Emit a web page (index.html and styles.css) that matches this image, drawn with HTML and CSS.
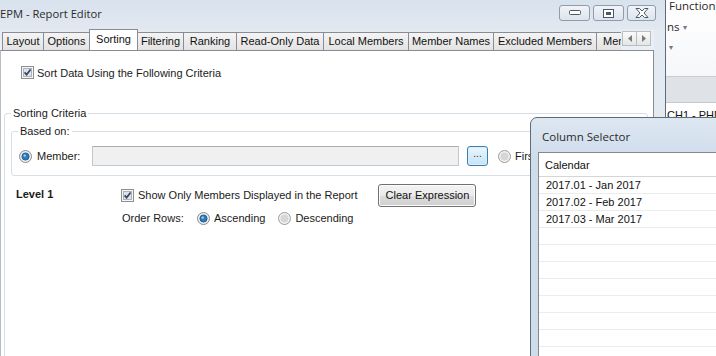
FILE: index.html
```html
<!DOCTYPE html>
<html>
<head>
<meta charset="utf-8">
<link rel="stylesheet" href="styles.css">
</head>
<body>
<div class="desktop">
  <div class="main-win">
    <div class="titlebar">
      <span class="title">EPM - Report Editor</span>
      <div class="wbtns">
        <div class="wbtn"><svg width="12" height="6" viewBox="0 0 12 6"><rect x="0.5" y="0.5" width="11" height="4" rx="1" fill="#fff" stroke="#4d5867"/></svg></div>
        <div class="wbtn"><svg width="11" height="9" viewBox="0 0 11 9"><rect x="0.5" y="0.5" width="10" height="8" fill="#fff" stroke="#4d5867"/><rect x="3" y="3" width="5" height="3" fill="#4d5867"/></svg></div>
        <div class="wbtn close"><svg width="14" height="10" viewBox="0 0 14 10"><path d="M1 0.5 H4.5 L7 3 L9.5 0.5 H13 L9 5 L13 9.5 H9.5 L7 7 L4.5 9.5 H1 L5 5 Z" fill="#fff" stroke="#4d5867" stroke-linejoin="round"/></svg></div>
      </div>
    </div>
    <div class="client">
      <div class="tabstrip">
        <div class="tab w-layout">Layout</div>
        <div class="tab w-options">Options</div>
        <div class="tab active w-sorting">Sorting</div>
        <div class="tab w-filtering">Filtering</div>
        <div class="tab w-ranking">Ranking</div>
        <div class="tab w-readonly">Read-Only Data</div>
        <div class="tab w-local">Local Members</div>
        <div class="tab w-names">Member Names</div>
        <div class="tab w-excluded">Excluded Members</div>
        <div class="tab w-men">Men</div>
        <div class="tab-scroll">
          <div class="sbtn"><svg width="4" height="7" viewBox="0 0 4 7"><path d="M4 0 L0 3.5 L4 7 Z" fill="#7a7a7a"/></svg></div>
          <div class="sbtn"><svg width="4" height="7" viewBox="0 0 4 7"><path d="M0 0 L4 3.5 L0 7 Z" fill="#7a7a7a"/></svg></div>
        </div>
      </div>
      <div class="tabpage">
        <div class="row top-chk">
          <svg class="chk" width="13" height="13" viewBox="0 0 13 13"><rect x="0.5" y="0.5" width="12" height="12" fill="#f6f6f6" stroke="#8e8f8f"/><rect x="2.5" y="2.5" width="8" height="8" fill="#dfe2e6" stroke="#aeb3b9"/><path d="M3.6 6.4 L5.6 8.6 L9.6 3.4" fill="none" stroke="#36466a" stroke-width="1.7"/></svg>
          <span>Sort Data Using the Following Criteria</span>
        </div>
        <fieldset class="group sorting">
          <legend>Sorting Criteria</legend>
          <fieldset class="group basedon">
            <legend>Based on:</legend>
            <div class="row member-row">
              <svg class="radio" width="13" height="13" viewBox="0 0 13 13"><circle cx="6.5" cy="6.5" r="6" fill="#eeeeee" stroke="#8a8a8a"/><circle cx="6.5" cy="6.5" r="3.6" fill="#2a7cc0" stroke="#1a4f80" stroke-width="0.8"/><circle cx="5.7" cy="5.6" r="1.2" fill="#9fd3f5"/></svg>
              <span class="lbl-member">Member:</span>
              <div class="textbox"></div>
              <div class="dots-btn">...</div>
              <svg class="radio" width="13" height="13" viewBox="0 0 13 13"><circle cx="6.5" cy="6.5" r="6" fill="#f2f2f2" stroke="#9a9a9a"/><circle cx="6.5" cy="6.5" r="4" fill="#d6d6d6"/></svg>
              <span class="lbl-first">First</span>
            </div>
          </fieldset>
          <div class="level-grid">
            <div class="level-lbl">Level 1</div>
            <div class="row level-row1">
              <svg class="chk" width="13" height="13" viewBox="0 0 13 13"><rect x="0.5" y="0.5" width="12" height="12" fill="#f6f6f6" stroke="#8e8f8f"/><rect x="2.5" y="2.5" width="8" height="8" fill="#dfe2e6" stroke="#aeb3b9"/><path d="M3.6 6.4 L5.6 8.6 L9.6 3.4" fill="none" stroke="#36466a" stroke-width="1.7"/></svg>
              <span>Show Only Members Displayed in the Report</span>
              <div class="btn">Clear Expression</div>
            </div>
            <div></div>
            <div class="row level-row2">
              <span class="lbl-order">Order Rows:</span>
              <svg class="radio" width="13" height="13" viewBox="0 0 13 13"><circle cx="6.5" cy="6.5" r="6" fill="#eeeeee" stroke="#8a8a8a"/><circle cx="6.5" cy="6.5" r="3.6" fill="#2a7cc0" stroke="#1a4f80" stroke-width="0.8"/><circle cx="5.7" cy="5.6" r="1.2" fill="#9fd3f5"/></svg>
              <span class="lbl-asc">Ascending</span>
              <svg class="radio" width="13" height="13" viewBox="0 0 13 13"><circle cx="6.5" cy="6.5" r="6" fill="#f2f2f2" stroke="#9a9a9a"/><circle cx="6.5" cy="6.5" r="4" fill="#d6d6d6"/></svg>
              <span class="lbl-desc">Descending</span>
            </div>
          </div>
        </fieldset>
      </div>
    </div>
  </div>
  <div class="side-app">
    <div class="side-top">
      <div class="side-func">Function</div>
      <div class="side-ns">ns <span class="caret">&#9662;</span></div>
      <div class="side-caret">&#9662;</div>
    </div>
    <div class="side-band"></div>
    <div class="side-cell">CH1 - PHD:</div>
  </div>
  <div class="col-selector">
    <div class="cs-title">Column Selector</div>
    <div class="cs-list">
      <div class="cs-head">Calendar</div>
      <div class="cs-row">2017.01 - Jan 2017</div>
      <div class="cs-row">2017.02 - Feb 2017</div>
      <div class="cs-row">2017.03 - Mar 2017</div>
      <div class="cs-row"></div>
      <div class="cs-row"></div>
      <div class="cs-row"></div>
      <div class="cs-row"></div>
      <div class="cs-row"></div>
      <div class="cs-row"></div>
      <div class="cs-row"></div>
      <div class="cs-row"></div>
    </div>
  </div>
</div>
</body>
</html>
```
FILE: styles.css
```css
* { box-sizing: border-box; }
html, body { margin: 0; padding: 0; }
body {
  width: 716px;
  height: 356px;
  overflow: hidden;
  font-family: "Liberation Sans", Arial, sans-serif;
  font-size: 11px;
  color: #1a1a1a;
  background: #fff;
}
.desktop {
  position: relative;
  display: flex;
  width: 716px;
  height: 356px;
}
.main-win {
  width: 666px;
  flex: none;
  height: 400px;
  border-right: 1px solid #5f6b78;
  background: #e4eaf1;
  display: flex;
  flex-direction: column;
}
.titlebar {
  height: 29px;
  flex: none;
  display: flex;
  align-items: flex-start;
  justify-content: space-between;
  background: linear-gradient(#d8e2ed, #e2e8f0);
}
.title {
  font-family: "Open Sans", "Noto Sans", sans-serif;
  font-size: 11.2px;
  color: #2b2b2b;
  line-height: 14px;
  margin-top: 7px;
  margin-left: 0;
}
.wbtns {
  display: flex;
  gap: 3px;
  margin-top: 5px;
  margin-right: 9px;
}
.wbtn {
  width: 31px;
  height: 16px;
  border: 1px solid #8d9cae;
  border-radius: 3px;
  background: linear-gradient(#f1f4f8, #dde4ec);
  display: flex;
  align-items: center;
  justify-content: center;
}
.wbtn.close { width: 29px; }
.client {
  flex: 1;
  display: flex;
  flex-direction: column;
  padding-right: 11px;
  background: #e4eaf1;
}
.tabstrip {
  position: relative;
  height: 21px;
  display: flex;
  align-items: flex-end;
  padding-left: 2px;
  overflow: hidden;
  flex: none;
  background: linear-gradient(#e4eaf1, #eef2f6);
}
.tab {
  height: 18px;
  flex: none;
  margin-left: -1px;
  border: 1px solid #898c95;
  border-bottom: none;
  background: linear-gradient(#f4f4f4, #e3e3e3);
  text-align: center;
  line-height: 16px;
  color: #111;
  white-space: nowrap;
  overflow: hidden;
}
.tab:first-child { margin-left: 0; }
.tab.active {
  height: 22px;
  background: #fff;
  line-height: 18px;
  position: relative;
  z-index: 1;
  margin-bottom: -1px;
}
.w-layout { width: 42px; }
.w-options { width: 47px; }
.w-sorting { width: 49px; }
.w-filtering { width: 47px; }
.w-ranking { width: 54px; }
.w-readonly { width: 88px; }
.w-local { width: 86px; }
.w-names { width: 86px; }
.w-excluded { width: 104px; }
.w-men { width: 60px; text-align: left; padding-left: 6px; }
.tab-scroll {
  position: absolute;
  left: 621px;
  top: 1px;
  width: 33px;
  height: 20px;
  background: #eaeff4;
  display: flex;
  padding-top: 1px;
  padding-left: 1px;
}
.sbtn {
  width: 15px;
  height: 15px;
  border: 1px solid #b9bec6;
  background: linear-gradient(#fafafa, #e6e6e6);
  display: flex;
  align-items: center;
  justify-content: center;
  margin-right: -1px;
}
.tabpage {
  flex: 1;
  background: #fff;
  border: 1px solid #898c95;
  border-left-color: #b8bcc4;
  padding-top: 15px;
}
.row {
  display: flex;
  align-items: center;
}
.top-chk {
  height: 13px;
  padding-left: 20px;
}
.chk { flex: none; margin-right: 3px; }
.radio { flex: none; }
.group {
  margin: 0;
  border: 1px solid #d5dfe5;
  border-radius: 3px;
  padding: 0 6px;
  min-width: 0;
}
.group legend {
  padding: 0 2px;
  margin-left: 0;
  line-height: 14px;
  color: #1a1a1a;
}
.sorting {
  margin-top: 27px;
  margin-left: 3px;
  width: 644px;
  height: 300px;
  padding-top: 4px;
}
.basedon {
  width: 640px;
  padding-top: 8px;
  padding-bottom: 9px;
}
.member-row {
  height: 20px;
  padding-left: 1px;
}
.lbl-member { margin-left: 5px; width: 55px; }
.textbox {
  width: 367px;
  height: 20px;
  border: 1px solid #c4c7cc;
  border-top-color: #abadb3;
  background: #f0f0f0;
}
.dots-btn {
  margin-left: 8px;
  width: 21px;
  height: 20px;
  border: 1px solid #3c7fb1;
  border-radius: 3px;
  background: linear-gradient(#eaf6fd, #c6e3f5);
  box-shadow: inset 0 0 0 1px #d7effc;
  text-align: center;
  line-height: 14px;
  font-size: 10px;
  color: #333;
  margin-right: 10px;
}
.lbl-first { margin-left: 4px; }
.level-grid {
  display: grid;
  grid-template-columns: 110px auto;
  margin-top: 8px;
  row-gap: 5px;
  align-items: center;
}
.level-lbl {
  font-weight: bold;
  padding-left: 5px;
  padding-bottom: 3px;
}
.level-row1 { height: 22px; }
.level-row1 .chk { margin-right: 4px; }
.btn {
  margin-left: 21px;
  width: 98px;
  height: 23px;
  border: 1px solid #707070;
  border-radius: 3px;
  background: linear-gradient(#f3f3f3 0%, #ebebeb 50%, #dddddd 51%, #cfcfcf 100%);
  box-shadow: inset 0 0 0 1px #fcfcfc;
  text-align: center;
  line-height: 20px;
  color: #111;
}
.level-row2 { height: 14px; padding-left: 1px; }
.lbl-order { width: 75px; }
.lbl-asc { margin-left: 4px; margin-right: 13px; }
.lbl-desc { margin-left: 4px; }
.side-app {
  flex: 1;
  background: #fff;
  display: flex;
  flex-direction: column;
  font-family: "Open Sans", "Noto Sans", sans-serif;
  font-size: 11.5px;
  color: #2a2a2a;
  overflow: hidden;
}
.side-top {
  height: 77px;
  border-bottom: 1px solid #c9ccd1;
  padding-left: 3px;
  background: linear-gradient(#ffffff, #f6f7f9);
}
.side-func { line-height: 13px; margin-top: -1px; white-space: nowrap; }
.side-ns { line-height: 14px; margin-top: 8px; margin-left: -2px; }
.caret { font-size: 8px; color: #777; vertical-align: 1px; }
.side-caret { font-size: 8px; line-height: 10px; color: #777; margin-top: 8px; }
.side-band {
  height: 26px;
  background: #dfe2e7;
  border-bottom: 1px solid #c6c9ce;
}
.side-cell {
  font-family: "Liberation Sans", Arial, sans-serif;
  font-size: 11px;
  line-height: 12px;
  margin-top: 6px;
  padding-left: 1px;
  white-space: nowrap;
  color: #111;
}
.col-selector {
  position: absolute;
  left: 530px;
  top: 117px;
  width: 200px;
  height: 260px;
  border: 1px solid #5d6b7a;
  border-top-left-radius: 7px;
  background: linear-gradient(#dde7f2, #cfdcea 40px, #cfdcea);
  padding-left: 7px;
  z-index: 5;
}
.cs-title {
  height: 34px;
  font-family: "Open Sans", "Noto Sans", sans-serif;
  font-size: 11.5px;
  color: #2b2b2b;
  padding-left: 4px;
  padding-top: 12px;
  line-height: 14px;
}
.cs-list {
  background: #fff;
  border: 1px solid #828790;
  height: 230px;
  overflow: hidden;
}
.cs-head {
  height: 24px;
  line-height: 24px;
  padding-left: 6px;
  border-bottom: 1px solid #d5d5d5;
  color: #111;
}
.cs-row {
  height: 17px;
  line-height: 17px;
  padding-left: 7px;
  border-bottom: 1px solid #ececec;
  color: #111;
}
```
